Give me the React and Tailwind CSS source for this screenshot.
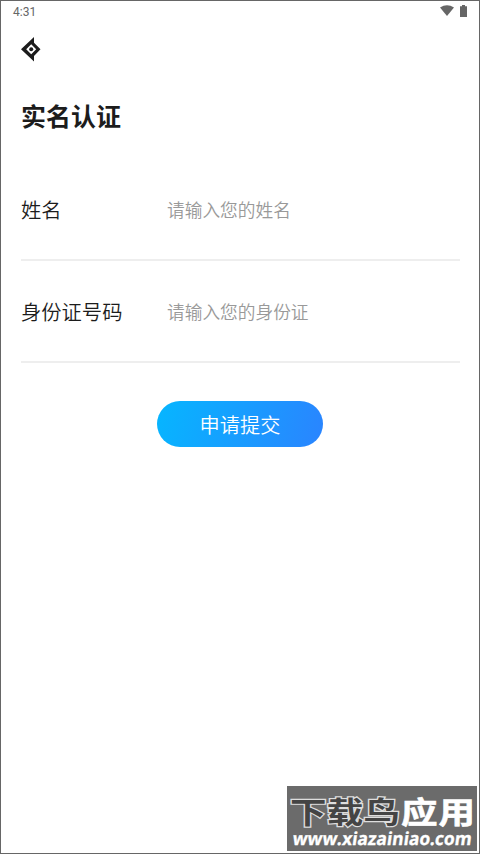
function StatusBar() {
  return (
    <div className="flex h-[21px] items-center justify-between pl-[12px] pr-[12px] font-['Roboto','Noto_Sans_CJK_SC',sans-serif] text-[12px] text-[#666]">
      <span>4:31</span>
      <div className="flex items-center gap-[6px]">
        <svg className="mb-[2px] h-[11px] w-[14px]" viewBox="0 0 14 11">
          <path d="M7 11L0 2.5Q7 -2 14 2.5Z" fill="#666" />
        </svg>
        <svg className="mb-[2px] h-[12px] w-[7px]" viewBox="0 0 7 12">
          <path d="M2 0h3v1.3h2V12H0V1.3h2Z" fill="#666" />
        </svg>
      </div>
    </div>
  );
}

function Field({ label, placeholder }) {
  return (
    <div className="flex h-[102px] items-center border-b-2 border-[#eee]">
      <label className="w-[146px] shrink-0 text-[20.3px] font-[350] leading-none text-[#1c1c1c]">{label}</label>
      <input
        className="min-w-0 flex-1 bg-transparent pb-[1px] text-[17.7px] font-[350] leading-[26px] text-[#333] outline-none placeholder:text-[#999]"
        placeholder={placeholder}
      />
    </div>
  );
}

export default function App() {
  return (
    <main className="relative flex h-[854px] w-[480px] flex-col overflow-hidden border border-[#666] bg-white font-['Noto_Sans_CJK_SC',sans-serif]">
      <StatusBar />

      {/* 返回 */}
      <button className="ml-[20px] mt-[15px] w-[20px]" aria-label="返回">
        <svg className="block h-[25px] w-[20px]" viewBox="0 0 20 25">
          <path
            fillRule="evenodd"
            fill="#1c1c1c"
            d="M0 12.3L13 0V5.7L19.5 12.3L13 18.9V24.6ZM5.2 12.3L10.2 17.3L15.2 12.3L10.2 7.3Z"
          />
          <circle cx="10.2" cy="12.3" r="2" fill="#1c1c1c" />
        </svg>
      </button>

      <h1 className="ml-[20px] mt-[35px] text-[25px] font-bold leading-[36px] text-[#1c1c1c]">实名认证</h1>

      {/* 表单 */}
      <form className="mx-[19px] mt-[26px] flex flex-col pl-[1px]">
        <Field label="姓名" placeholder="请输入您的姓名" />
        <Field label="身份证号码" placeholder="请输入您的身份证" />
        <button
          type="button"
          className="mr-[1px] mt-[38px] flex h-[46px] w-[166px] items-center justify-center self-center rounded-full bg-linear-[105deg,#06b6ff,#2a84ff] pt-[2px] text-[20.2px] font-[350] text-white"
        >
          申请提交
        </button>
      </form>

      {/* 水印 */}
      <div className="absolute left-[286px] top-[785px] flex h-[65px] w-[190px] flex-col items-center bg-[#6b6b6b] text-white">
        <svg className="block h-[65px] w-[190px]" viewBox="0 0 190 65">
          <g transform="translate(3 37) scale(1 .82)" className="text-[36.5px] font-bold">
            <text className="fill-[#444] stroke-[#ddd] stroke-[3px] [paint-order:stroke]" textLength="110">
              下载鸟
            </text>
            <text x="111" className="fill-white stroke-white stroke-[0.7px]" textLength="74">
              应用
            </text>
          </g>
          <text
            transform="translate(5 58.5) skewX(-8)"
            textLength="179"
            lengthAdjust="spacingAndGlyphs"
            className="fill-white stroke-white stroke-[0.3px] font-['Open_Sans',sans-serif] text-[18px] font-bold"
          >
            www.xiazainiao.com
          </text>
        </svg>
      </div>
    </main>
  );
}
